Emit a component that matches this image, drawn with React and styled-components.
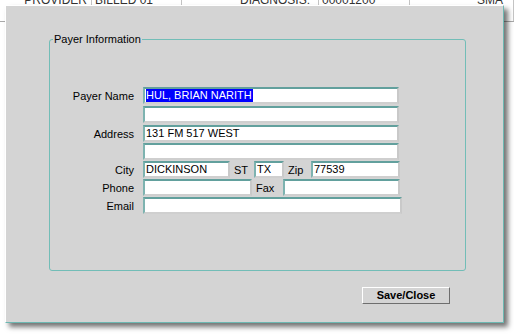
import React from 'react'
import styled, { createGlobalStyle } from 'styled-components'

const GlobalStyle = createGlobalStyle`
  html, body { margin: 0; padding: 0; background: #ffffff; }
  body {
    font-family: "Liberation Sans", Arial, sans-serif;
    font-size: 11px;
    color: #000;
  }
`

const Screen = styled.div`
  position: relative;
  width: 514px;
  height: 336px;
  overflow: hidden;
  background: #ffffff;
`

/* the grid that sits behind the modal */
const BackRow = styled.div`
  display: flex;
  height: 28px;
  margin-top: -7px;
  border-bottom: 1px solid #a9a9a9;
  font-size: 12px;
  line-height: 14px;
  color: #333;
`

const BackCell = styled.div`
  width: ${p => p.$w}px;
  flex-shrink: 0;
  box-sizing: border-box;
  border-right: 1px solid #c4c4c4;
  text-align: ${p => p.$align || 'left'};
  padding: 0 ${p => p.$pad || 3}px;
  white-space: nowrap;
  overflow: hidden;
`

const Dialog = styled.div`
  position: absolute;
  left: 5px;
  top: 5px;
  width: 499px;
  height: 318px;
  box-sizing: border-box;
  background: #d4d4d4;
  border-top: 1px solid #ffffff;
  border-left: 1px solid #ffffff;
  border-right: 1px solid #6cb8b2;
  border-bottom: 1px solid #6cb8b2;
  box-shadow: 4px 4px 5px rgba(0, 0, 0, 0.55);
  padding: 27px 0 0 43px;
  display: flex;
  flex-direction: column;
`

const Group = styled.fieldset`
  width: 417px;
  height: 238px;
  box-sizing: border-box;
  margin: 0;
  padding: 41px 0 0 0;
  border: 1px solid #72bdb7;
  border-radius: 3px;
  min-width: 0;
`

const Legend = styled.legend`
  margin-left: 3px;
  padding: 0 1px;
  line-height: 13px;
  font-size: 11px;
`

const Row = styled.div`
  display: flex;
  align-items: center;
  height: 17px;
  margin-top: ${p => p.$mt || 0}px;
`

const Label = styled.div`
  width: 84px;
  margin-right: 9px;
  flex-shrink: 0;
  text-align: right;
`

const InlineLabel = styled.div`
  width: ${p => p.$w}px;
  flex-shrink: 0;
  box-sizing: border-box;
  padding-left: 4px;
`

const Field = styled.div`
  width: ${p => p.$w || 256}px;
  height: 17px;
  flex-shrink: 0;
  box-sizing: border-box;
  background: #ffffff;
  border-top: 2px solid #62a09d;
  border-left: 2px solid #7db3b0;
  border-right: 2px solid #c9c9c9;
  border-bottom: 2px solid #cfcfcf;
  padding: 0 1px;
  line-height: 13px;
  white-space: nowrap;
  overflow: hidden;
`

const Selected = styled.span`
  background: #0000ff;
  color: #ffffff;
  display: inline-block;
  line-height: 13px;
  padding-right: 1px;
`

const Footer = styled.div`
  display: flex;
  justify-content: flex-end;
  margin-top: 16px;
  padding-right: 53px;
`

const Button = styled.button`
  width: 88px;
  height: 17px;
  box-sizing: border-box;
  margin: 0;
  padding: 0;
  background: #d4d4d4;
  border-top: 1px solid #ffffff;
  border-left: 1px solid #ffffff;
  border-right: 1px solid #6e6e6e;
  border-bottom: 1px solid #6e6e6e;
  font-family: "Liberation Sans", Arial, sans-serif;
  font-size: 11px;
  font-weight: bold;
  color: #000;
  line-height: 13px;
`

export default function App() {
  return (
    <Screen>
      <GlobalStyle />
      <BackRow>
        <BackCell $w={92} $align="right" $pad={4}>PROVIDER</BackCell>
        <BackCell $w={90}>BILLED 01</BackCell>
        <BackCell $w={137} $align="right" $pad={8}>DIAGNOSIS:</BackCell>
        <BackCell $w={91}>00001200</BackCell>
        <BackCell $w={104} $align="right" $pad={10}>SMA</BackCell>
      </BackRow>

      <Dialog>
        <Group>
          <Legend>Payer Information</Legend>
          <Row>
            <Label>Payer Name</Label>
            <Field><Selected>HUL, BRIAN NARITH</Selected></Field>
          </Row>
          <Row $mt={2}>
            <Label />
            <Field />
          </Row>
          <Row $mt={2}>
            <Label>Address</Label>
            <Field>131 FM 517 WEST</Field>
          </Row>
          <Row $mt={1}>
            <Label />
            <Field />
          </Row>
          <Row $mt={1}>
            <Label>City</Label>
            <Field $w={87}>DICKINSON</Field>
            <InlineLabel $w={24}>ST</InlineLabel>
            <Field $w={30}>TX</Field>
            <InlineLabel $w={27}>Zip</InlineLabel>
            <Field $w={89}>77539</Field>
          </Row>
          <Row $mt={1}>
            <Label>Phone</Label>
            <Field $w={109} />
            <InlineLabel $w={31}>Fax</InlineLabel>
            <Field $w={117} />
          </Row>
          <Row $mt={1}>
            <Label>Email</Label>
            <Field $w={259} />
          </Row>
        </Group>
        <Footer>
          <Button>Save/Close</Button>
        </Footer>
      </Dialog>
    </Screen>
  )
}
